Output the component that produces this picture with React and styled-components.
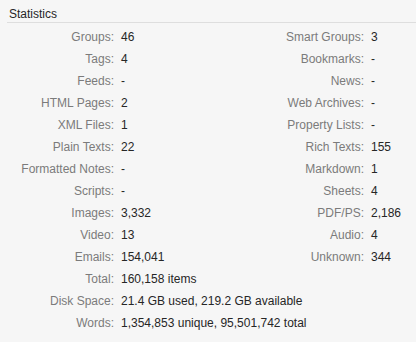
import React from "react";
import styled, { createGlobalStyle } from "styled-components";

const Global = createGlobalStyle`
  html, body { margin: 0; padding: 0; background: #f6f6f6; }
  body { font-family: "Liberation Sans", Arial, sans-serif; font-size: 12px; -webkit-font-smoothing: antialiased; }
`;

const Panel = styled.div`
  width: 416px;
  height: 342px;
  background: #f6f6f6;
  box-sizing: border-box;
`;

const Header = styled.div`
  margin-left: 7px;
  padding: 6px 0 0 2px;
  height: 16px;
  line-height: 16px;
  border-bottom: 1px solid #dedede;
  color: #262626;
  font-size: 12px;
`;

const Grid = styled.div`
  margin-top: 3px;
  display: grid;
  grid-template-columns: 114px 122px 114px 1fr;
  column-gap: 7px;
  grid-auto-rows: 22px;
  align-items: center;
  line-height: 22px;
`;

const Label = styled.div`
  text-align: right;
  color: #7b7b7b;
  white-space: nowrap;
`;

const Value = styled.div`
  color: #262626;
  white-space: nowrap;
  grid-column: ${(p) => (p.$wide ? "2 / span 3" : "auto")};
`;

const pairs = [
  ["Groups:", "46", "Smart Groups:", "3"],
  ["Tags:", "4", "Bookmarks:", "-"],
  ["Feeds:", "-", "News:", "-"],
  ["HTML Pages:", "2", "Web Archives:", "-"],
  ["XML Files:", "1", "Property Lists:", "-"],
  ["Plain Texts:", "22", "Rich Texts:", "155"],
  ["Formatted Notes:", "-", "Markdown:", "1"],
  ["Scripts:", "-", "Sheets:", "4"],
  ["Images:", "3,332", "PDF/PS:", "2,186"],
  ["Video:", "13", "Audio:", "4"],
  ["Emails:", "154,041", "Unknown:", "344"],
];

const singles = [
  ["Total:", "160,158 items"],
  ["Disk Space:", "21.4 GB used, 219.2 GB available"],
  ["Words:", "1,354,853 unique, 95,501,742 total"],
];

export default function App() {
  return (
    <Panel>
      <Global />
      <Header>Statistics</Header>
      <Grid>
        {pairs.map(([a, b, c, d]) => (
          <React.Fragment key={a}>
            <Label>{a}</Label>
            <Value>{b}</Value>
            <Label>{c}</Label>
            <Value>{d}</Value>
          </React.Fragment>
        ))}
        {singles.map(([a, b]) => (
          <React.Fragment key={a}>
            <Label>{a}</Label>
            <Value $wide>{b}</Value>
          </React.Fragment>
        ))}
      </Grid>
    </Panel>
  );
}
